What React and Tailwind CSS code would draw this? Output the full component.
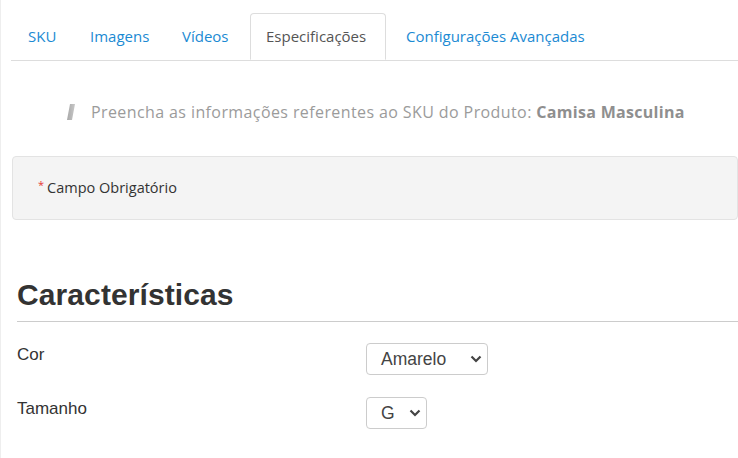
export default function App() {
  const tabs = [
    { t: "SKU", w: "w-[62px] pl-[17px]" },
    { t: "Imagens", w: "w-[92px] pl-[17px]" },
    { t: "Vídeos", w: "w-[85px] pl-[17px]" },
    { t: "Especificações", w: "" },
    { t: "Configurações Avançadas", w: "pl-[20px]" },
  ];
  return (
    <div className="w-[738px] h-[458px] overflow-hidden bg-white border-l border-[#eeeeee]" style={{ fontFamily: "'Open Sans', sans-serif" }}>
      <div className="pt-[13px] pl-[10px]">
        <div className="flex border-b border-[#dddddd]">
          {tabs.map((x, i) =>
            i === 3 ? (
              <div key={x.t} className="h-[47px] w-[136px] pl-[15px] flex items-center border border-[#dddddd] border-b-white rounded-t-[4px] bg-white mb-[-1px] text-[15px] text-[#555555] whitespace-nowrap">
                {x.t}
              </div>
            ) : (
              <div key={x.t} className={`h-[47px] flex items-center text-[15px] text-[#1b8ad3] whitespace-nowrap ${x.w}`}>
                {x.t}
              </div>
            )
          )}
        </div>
      </div>

      <div className="h-[95px] flex items-center pl-[65px] gap-[15px] pt-[6px]">
        <svg width="10" height="16" viewBox="0 0 10 16">
          <defs>
            <linearGradient id="g" x1="0" y1="0" x2="1" y2="0">
              <stop offset="0" stopColor="#a8a8a8" />
              <stop offset="1" stopColor="#c8c8c8" />
            </linearGradient>
          </defs>
          <polygon points="4,0 9,0 6,16 1,16" fill="url(#g)" />
        </svg>
        <div className="text-[16px] text-[#9b9b9b] tracking-[0.4px] whitespace-nowrap">
          Preencha as informações referentes ao SKU do Produto: <span className="font-bold text-[#8f8f8f] tracking-[0.3px]">Camisa Masculina</span>
        </div>
      </div>

      <div className="ml-[11px] h-[64px] bg-[#f4f4f4] border border-[#e3e3e3] rounded-[4px] flex items-center pl-[25px] text-[14.5px] text-[#333333]">
        <span className="text-[#e53935] text-[11px] mr-[3px] mb-[6px]">*</span>Campo Obrigatório
      </div>

      <div className="ml-[16px] mt-[57px] pb-[9px] border-b border-[#cccccc] text-[30px] font-bold text-[#333333] leading-[35px] tracking-[0.1px]" style={{ fontFamily: "'Liberation Sans', Arial, sans-serif" }}>
        Características
      </div>

      <div className="ml-[16px] mt-[21px] flex flex-col gap-[22px]" style={{ fontFamily: "'Liberation Sans', Arial, sans-serif" }}>
        <div className="flex items-center h-[32px]">
          <div className="w-[349px] text-[17px] text-[#333333] mt-[-8px]">Cor</div>
          <div className="h-[32px] w-[122px] border border-[#cccccc] rounded-[4px] flex items-center justify-between pl-[14px] pr-[5px] text-[17.5px] text-[#444444]">
            <span>Amarelo</span>
            <svg width="12" height="8" viewBox="0 0 12 8"><path d="M1.5 1.5l4.5 4.5L10.5 1.5" fill="none" stroke="#444" strokeWidth="2.2" /></svg>
          </div>
        </div>
        <div className="flex items-center h-[32px]">
          <div className="w-[349px] text-[17px] text-[#333333] mt-[-8px]">Tamanho</div>
          <div className="h-[32px] w-[61px] border border-[#cccccc] rounded-[4px] flex items-center justify-between pl-[14px] pr-[5px] text-[17.5px] text-[#444444]">
            <span>G</span>
            <svg width="12" height="8" viewBox="0 0 12 8"><path d="M1.5 1.5l4.5 4.5L10.5 1.5" fill="none" stroke="#444" strokeWidth="2.2" /></svg>
          </div>
        </div>
      </div>
    </div>
  );
}
